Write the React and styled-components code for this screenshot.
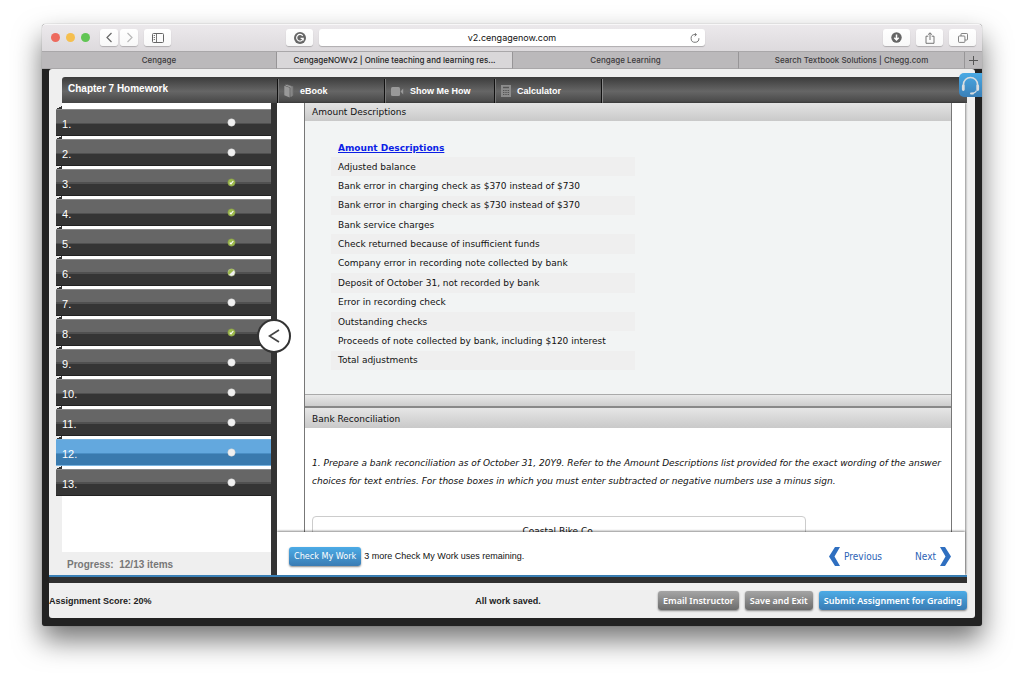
import styled, { createGlobalStyle, css } from 'styled-components';

const GlobalStyle = createGlobalStyle`
    * {
        box-sizing: border-box;
    }
    body {
        margin: 0;
        background: #fff;
        font-family: "Liberation Sans", Arial, sans-serif;
        font-size: 9px;
        color: #111;
    }
    button {
        font: inherit;
        padding: 0;
        border: 0;
        cursor: pointer;
    }
    svg {
        display: block;
        flex: none;
    }
`;

const Desktop = styled.div`
    display: flex;
    height: 100vh;
    padding: 24px 42px 60px;
    overflow: hidden;
`;

const Window = styled.div`
    flex: 1;
    min-width: 0;
    display: flex;
    flex-direction: column;
    background: #222;
    border-radius: 4px 4px 3px 3px;
    box-shadow: 0 0 1px rgba(0, 0, 0, 0.5), 0 14px 28px rgba(0, 0, 0, 0.55);
`;

/* browser chrome */

const Toolbar = styled.div`
    display: grid;
    grid-template-columns: 235fr 419fr 271fr;
    align-items: center;
    height: 27px;
    padding: 0 6px 0 9px;
    border-radius: 4px 4px 0 0;
    background: linear-gradient(#ece9ec, #dddadd);
    box-shadow: inset 0 1px 0 #f8f7f8;
`;

const ToolGroup = styled.div`
    display: flex;
    align-items: center;
    justify-content: ${({$end}) => $end ? 'flex-end' : 'flex-start'};
    gap: 6px;
`;

const Lights = styled.div`
    display: flex;
    gap: 6px;
    margin-right: 4px;
`;

const Light = styled.span`
    width: 9px;
    height: 9px;
    border-radius: 50%;
    background: ${({$color}) => $color};
`;

const NavPair = styled.div`
    display: flex;
    gap: 2px;
`;

const ToolButton = styled.button`
    display: flex;
    align-items: center;
    justify-content: center;
    width: ${({$small}) => $small ? '18px' : '27px'};
    height: 17px;
    color: ${({$faded}) => $faded ? '#b9b9b9' : '#666'};
    background: linear-gradient(#fff, #f8f8f8);
    border-radius: 3px;
    box-shadow: 0 1px 1px rgba(0, 0, 0, 0.22);
`;

const AddressBar = styled.div`
    flex: 1;
    display: flex;
    align-items: center;
    height: 17px;
    padding: 0 5px 0 15px;
    color: #777;
    background: #fff;
    border-radius: 3px;
    box-shadow: 0 1px 1px rgba(0, 0, 0, 0.22);
    input {
        flex: 1;
        min-width: 0;
        padding: 0;
        border: 0;
        outline: 0;
        background: none;
        color: #111;
        text-align: center;
        font: 9px Inter, sans-serif;
    }
`;

const TabBar = styled.div`
    display: grid;
    grid-template-columns: 235fr 236fr 226fr 226fr 17px;
    height: 18px;
    border-top: 1px solid #a9a7a9;
`;

const Tab = styled.button`
    overflow: hidden;
    white-space: nowrap;
    text-overflow: ellipsis;
    font: 500 8px Inter, sans-serif;
    color: ${({$active}) => $active ? '#222' : '#3c3a3c'};
    background: ${({$active}) => $active ? '#d9d7d9' : '#bbb9bb'};
    border-right: 1px solid #979597;
    border-bottom: 1px solid #a9a7a9;
    &:last-child {
        display: grid;
        place-items: center;
        border-right: 0;
    }
`;

/* page */

const Page = styled.div`
    position: relative;
    flex: 1;
    min-height: 0;
    display: flex;
    flex-direction: column;
    margin: 0 7px 8px;
    padding-top: 8px;
    background: #efefef;
    border-radius: 3px;
`;

const Support = styled.button`
    position: absolute;
    top: 4px;
    right: -7px;
    width: 23px;
    height: 24px;
    display: grid;
    place-items: center;
    color: #d9dde0;
    background: linear-gradient(#4aa9e4, #3a80b8);
    border-radius: 5px 0 0 5px;
`;

const Header = styled.header`
    display: flex;
    height: 26px;
    margin: 0 8px 0 13px;
    color: #fff;
    background: linear-gradient(#3b3b3b, #666 55%, #464646);
    border-radius: 3px 0 0 0;
    h1 {
        width: 215px;
        margin: 0;
        padding: 5px 6px;
        font-size: 10px;
        line-height: 13px;
        font-weight: bold;
    }
`;

const Tool = styled.button`
    display: flex;
    align-items: center;
    gap: 6px;
    width: ${({$width}) => $width}px;
    margin-top: 2px;
    padding: 0 0 0 6px;
    color: #fff;
    background: none;
    font-weight: bold;
    border-left: 1px solid #111;
    box-shadow: inset 1px 0 0 #777;
    svg {
        color: #999;
    }
`;

const ToolEnd = styled.span`
    flex: 1;
    margin-top: 2px;
    border-left: 1px solid #111;
    box-shadow: inset 1px 0 0 #888;
`;

const Body = styled.div`
    flex: 1;
    min-height: 0;
    display: flex;
    padding-right: 10px;
`;

const Sidebar = styled.nav`
    display: flex;
    flex-direction: column;
    width: 222px;
    padding-left: 13px;
`;

const Questions = styled.ol`
    flex: 1;
    min-height: 0;
    margin: 0;
    padding: 3px 0 0;
    list-style: none;
    background: #fff;
    li {
        margin-left: -6px;
    }
    li::before {
        content: "";
        display: block;
        width: 6px;
        height: 3px;
        background: linear-gradient(to bottom right, #efefef 50%, #333 51%);
    }
`;

const Question = styled.button`
    display: flex;
    align-items: center;
    justify-content: space-between;
    width: 100%;
    height: 27px;
    padding: 3px 35px 0 6px;
    color: #fff;
    font-size: 11px;
    border-top: 1px solid #888;
    border-bottom: 1px solid #222;
    background: linear-gradient(#666 50%, #505050 50%, #505050 56%, #353535 56%);
    ${({$current}) => $current && css`
        border-color: #7ab4e0;
        background: linear-gradient(#63a8de 50%, #4a8ec4 50%, #4a8ec4 56%, #3a7aae 56%);
    `}
    svg {
        margin-bottom: 3px;
    }
`;

const Progress = styled.div`
    padding: 6px 5px 4px;
    height: 23px;
    color: #777;
    font-size: 10px;
    line-height: 13px;
    font-weight: bold;
    white-space: pre;
`;

const Divider = styled.div`
    position: relative;
    z-index: 1;
    width: 6px;
    background: #333;
`;

const Collapse = styled.button`
    position: absolute;
    top: 216px;
    left: -14px;
    width: 34px;
    height: 34px;
    display: grid;
    place-items: center;
    color: #444;
    background: #fff;
    border: 2px solid #333;
    border-radius: 50%;
`;

const Main = styled.main`
    flex: 1;
    min-width: 0;
    display: flex;
    flex-direction: column;
    background: #fff;
    box-shadow: 1px 0 2px rgba(0, 0, 0, 0.4);
`;

const Reader = styled.div`
    flex: 1;
    min-height: 0;
    overflow: hidden;
    padding: 0 13px 0 27px;
    font-family: "DejaVu Sans", Verdana, sans-serif;
`;

const Panel = styled.section`
    border: solid #777;
    border-width: 0 1px;
    &:first-child {
        margin-top: -2px;
    }
    h2 {
        margin: 0;
        padding: 2px 7px 0;
        font-size: 9px;
        line-height: 18px;
        font-weight: normal;
        background: linear-gradient(#e6e6e6, #c9c9c9);
    }
`;

const PanelBody = styled.div`
    padding: 17px 26px 24px;
    background: #f2f4f4;
`;

const PanelFoot = styled.div`
    height: 14px;
    border-top: 1px solid #aaa;
    border-bottom: 2px solid #888;
    background: linear-gradient(#e8e8e8, #cdcdcd);
`;

const Descriptions = styled.table`
    width: 304px;
    height: 232px;
    border-collapse: collapse;
    text-align: left;
    th, td {
        height: 19px;
        padding: 0 7px;
    }
    tbody tr:nth-child(odd) {
        background: #efefef;
    }
    a {
        color: #0a1ee6;
    }
`;

const Task = styled.div`
    padding: 26px 7px 0;
    p {
        margin: 0;
        line-height: 18px;
        font-style: italic;
    }
`;

const Sheet = styled.div`
    width: 494px;
    max-width: 100%;
    height: 120px;
    margin-top: 26px;
    padding-top: 9px;
    text-align: center;
    border: 1px solid #ccc;
    border-radius: 4px;
`;

const Actions = styled.div`
    position: relative;
    display: flex;
    align-items: center;
    height: 43px;
    padding: 5px 14px 0 12px;
    background: #fff;
    box-shadow: 0 -1px 2px rgba(0, 0, 0, 0.45);
    span {
        flex: 1;
        padding-left: 3px;
    }
`;

const Pager = styled.a`
    display: flex;
    align-items: center;
    gap: 4px;
    margin-left: ${({$gap}) => $gap ? '33px' : '0'};
    color: #2b62b5;
    font: 10px "DejaVu Sans Condensed", "DejaVu Sans", sans-serif;
    text-decoration: none;
`;

const Button = styled.button`
    height: 19px;
    padding: 0 5px;
    color: #fff;
    font: ${({$strong}) => $strong ? '600 9px "Noto Sans"' : '9px "DejaVu Sans Condensed"'}, sans-serif;
    white-space: nowrap;
    border-radius: 3px;
    background: ${({$gray}) => $gray ? 'linear-gradient(#a5a5a5, #6c6c6c)' : 'linear-gradient(#4cabe6, #3a7cb4)'};
    box-shadow: 0 1px 2px rgba(0, 0, 0, 0.45);
`;

const Rail = styled.div`
    height: 8px;
    margin-right: 8px;
    background: #303030;
    border-top: 2px solid #3a80b6;
`;

const Footer = styled.footer`
    display: grid;
    grid-template-columns: 1fr auto 1fr;
    align-items: center;
    height: 35px;
    padding-right: 8px;
    font-weight: bold;
    color: #222;
    div {
        display: flex;
        justify-content: flex-end;
        gap: 6px;
    }
`;

const TABS = [
    'Cengage',
    'CengageNOWv2 | Online teaching and learning res...',
    'Cengage Learning',
    'Search Textbook Solutions | Chegg.com',
];

const STATUSES = ['open', 'open', 'done', 'done', 'done', 'half', 'open', 'done', 'open', 'open', 'open', 'open', 'open'];
const CURRENT = 12;

const DESCRIPTIONS = [
    'Adjusted balance',
    'Bank error in charging check as $370 instead of $730',
    'Bank error in charging check as $730 instead of $370',
    'Bank service charges',
    'Check returned because of insufficient funds',
    'Company error in recording note collected by bank',
    'Deposit of October 31, not recorded by bank',
    'Error in recording check',
    'Outstanding checks',
    'Proceeds of note collected by bank, including $120 interest',
    'Total adjustments',
];

function StatusDot({status}) {
    return (
        <svg width="9" height="9" viewBox="0 0 9 9">
            <circle cx="4.5" cy="4.5" r="3.7" fill={status === 'done' ? '#9dba4c' : '#f0f0f0'} stroke={status === 'open' ? '#ccc' : '#7d8f4a'} strokeWidth="0.5"/>
            {status === 'half' && <path d="M1.9 7.1A3.7 3.7 0 0 1 7.1 1.9Z" fill="#9dba4c"/>}
            {status === 'done' && <path d="M2.8 4.6 4 5.9 6.3 3" fill="none" stroke="#fff" strokeWidth="1.1"/>}
        </svg>
    );
}

function Chevron({right, size = 11}) {
    return (
        <svg width={size} height={size} viewBox="0 0 11 11" fill="none" stroke="currentColor" strokeWidth="1.2">
            <path d={right ? 'M3.5 1 8 5.5 3.5 10' : 'M7.5 1 3 5.5 7.5 10'}/>
        </svg>
    );
}

function PagerArrow({right}) {
    return (
        <svg width="11" height="19" viewBox="0 0 11 19" fill="#2f6fc0">
            <path d={right ? 'M0 0H5L11 9.5 5 19H0L5.5 9.5Z' : 'M11 0H6L0 9.5 6 19H11L5.5 9.5Z'}/>
        </svg>
    );
}

function BrowserBar() {
    return (
        <>
            <Toolbar>
                <ToolGroup>
                    <Lights>
                        <Light $color="#ed6a5e"/>
                        <Light $color="#f5bf4f"/>
                        <Light $color="#61c554"/>
                    </Lights>
                    <NavPair>
                        <ToolButton $small aria-label="Back"><Chevron/></ToolButton>
                        <ToolButton $small $faded aria-label="Forward"><Chevron right/></ToolButton>
                    </NavPair>
                    <ToolButton aria-label="Sidebar">
                        <svg width="12" height="10" viewBox="0 0 12 10" fill="none" stroke="currentColor">
                            <rect x="0.5" y="0.5" width="11" height="9" rx="1"/>
                            <path d="M4.5 0.5V9.5M1.7 2.5H3M1.7 4.5H3M1.7 6.5H3" strokeWidth="0.9"/>
                        </svg>
                    </ToolButton>
                </ToolGroup>
                <ToolGroup>
                    <ToolButton aria-label="Grammar check">
                        <svg width="12" height="12" viewBox="0 0 12 12">
                            <circle cx="6" cy="6" r="6" fill="currentColor"/>
                            <path d="M8.7 3.9A3.3 3.3 0 1 0 9.2 6.4H6.6M9.2 6.2V8.6" fill="none" stroke="#fff" strokeWidth="1.2"/>
                        </svg>
                    </ToolButton>
                    <AddressBar>
                        <input aria-label="Address" defaultValue="v2.cengagenow.com"/>
                        <svg width="10" height="10" viewBox="0 0 10 10" fill="none" stroke="currentColor">
                            <path d="M8.9 5.2A3.9 3.9 0 1 1 5 1.5H6.2"/>
                            <path d="M4.7 0 6.5 1.6 4.7 3.3"/>
                        </svg>
                    </AddressBar>
                </ToolGroup>
                <ToolGroup $end>
                    <ToolButton aria-label="Downloads">
                        <svg width="11" height="11" viewBox="0 0 11 11">
                            <circle cx="5.5" cy="5.5" r="5.2" fill="currentColor"/>
                            <path d="M5.5 2.4V7M3.3 5.7 5.5 8 7.7 5.7" fill="none" stroke="#fff" strokeWidth="1.5"/>
                        </svg>
                    </ToolButton>
                    <ToolButton aria-label="Share">
                        <svg width="10" height="12" viewBox="0 0 10 12" fill="none" stroke="currentColor" strokeWidth="0.9">
                            <path d="M3.3 4.2H1V11.3H9V4.2H6.7M5 8V0.9M2.9 2.8 5 0.8 7.1 2.8"/>
                        </svg>
                    </ToolButton>
                    <ToolButton aria-label="Show all tabs">
                        <svg width="10" height="10" viewBox="0 0 10 10" fill="none" stroke="currentColor" strokeWidth="0.8">
                            <rect x="0.5" y="3" width="6.4" height="6.4" rx="0.8"/>
                            <path d="M3 3V1.3Q3 0.5 3.8 0.5H8.7Q9.5 0.5 9.5 1.3V6.2Q9.5 7 8.7 7H7"/>
                        </svg>
                    </ToolButton>
                </ToolGroup>
            </Toolbar>
            <TabBar>
                {TABS.map((tab, i) => <Tab key={tab} $active={i === 1}>{tab}</Tab>)}
                <Tab aria-label="New tab">
                    <svg width="9" height="9" viewBox="0 0 9 9" stroke="#555"><path d="M4.5 0V9M0 4.5H9"/></svg>
                </Tab>
            </TabBar>
        </>
    );
}

function QuestionNav() {
    return (
        <Sidebar>
            <Questions>
                {STATUSES.map((status, i) => (
                    <li key={i}>
                        <Question $current={i + 1 === CURRENT}>
                            {i + 1}.
                            <StatusDot status={status}/>
                        </Question>
                    </li>
                ))}
            </Questions>
            <Progress>Progress:  12/13 items</Progress>
        </Sidebar>
    );
}

function App() {
    return (
        <Desktop>
            <GlobalStyle/>
            <Window>
                <BrowserBar/>
                <Page>
                    <Header>
                        <h1>Chapter 7 Homework</h1>
                        <Tool $width={107}>
                            <svg width="10" height="14" viewBox="0 0 10 14" fill="currentColor">
                                <path d="M0.3 1.8 5.6 3.8V13.6L0.3 11.2Z"/>
                                <path d="M1.2 1 3.4 0.4 9.2 2.4V11.6L7.4 12.4V3.4Z" fill="#7d7d7d"/>
                                <path d="M1.4 1.1 7 3.2V12.8" fill="none" stroke="#bbb" strokeWidth="0.6"/>
                            </svg>
                            eBook
                        </Tool>
                        <Tool $width={110}>
                            <svg width="13" height="9" viewBox="0 0 13 9" fill="currentColor">
                                <rect width="9" height="9" rx="1.5"/>
                                <path d="M9.6 4.5 12.2 1.6V7.4Z"/>
                            </svg>
                            Show Me How
                        </Tool>
                        <Tool $width={107}>
                            <svg width="10" height="12" viewBox="0 0 10 12">
                                <rect width="10" height="12" fill="#8c8c8c"/>
                                <path d="M2 2.5H8" stroke="#555" strokeWidth="1.4"/>
                                <path d="M2 5.5H8M2 7.5H8M2 9.5H8" stroke="#555" strokeDasharray="1.4 0.9"/>
                            </svg>
                            Calculator
                        </Tool>
                        <ToolEnd/>
                    </Header>
                    <Body>
                        <QuestionNav/>
                        <Divider>
                            <Collapse aria-label="Collapse question list">
                                <svg width="12" height="14" viewBox="0 0 12 14" fill="none" stroke="currentColor" strokeWidth="1.7">
                                    <path d="M11 1 1.5 7 11 13"/>
                                </svg>
                            </Collapse>
                        </Divider>
                        <Main>
                            <Reader>
                                <Panel>
                                    <h2>Amount Descriptions</h2>
                                    <PanelBody>
                                        <Descriptions>
                                            <thead>
                                                <tr><th><a href="#amounts">Amount Descriptions</a></th></tr>
                                            </thead>
                                            <tbody>
                                                {DESCRIPTIONS.map((text) => <tr key={text}><td>{text}</td></tr>)}
                                            </tbody>
                                        </Descriptions>
                                    </PanelBody>
                                    <PanelFoot/>
                                </Panel>
                                <Panel>
                                    <h2>Bank Reconciliation</h2>
                                    <Task>
                                        <p>1. Prepare a bank reconciliation as of October 31, 20Y9. Refer to the Amount
                                            Descriptions list provided for the exact wording of the answer choices for
                                            text entries. For those boxes in which you must enter subtracted or negative
                                            numbers use a minus sign.</p>
                                        <Sheet>Coastal Bike Co.</Sheet>
                                    </Task>
                                </Panel>
                            </Reader>
                            <Actions>
                                <Button>Check My Work</Button>
                                <span>3 more Check My Work uses remaining.</span>
                                <Pager href="#previous"><PagerArrow/>Previous</Pager>
                                <Pager href="#next" $gap>Next<PagerArrow right/></Pager>
                            </Actions>
                        </Main>
                    </Body>
                    <Rail/>
                    <Footer>
                        <span>Assignment Score: 20%</span>
                        <span>All work saved.</span>
                        <div>
                            <Button $gray $strong>Email Instructor</Button>
                            <Button $gray $strong>Save and Exit</Button>
                            <Button $strong>Submit Assignment for Grading</Button>
                        </div>
                    </Footer>
                    <Support aria-label="Support">
                        <svg width="19" height="19" viewBox="0 0 19 19" fill="none" stroke="currentColor">
                            <path d="M2.5 10V8.5A7 7 0 0 1 16.5 8.5V10" strokeWidth="1.6"/>
                            <path d="M2.3 10V13.5M16.7 10V13.5" strokeWidth="2.8" strokeLinecap="round"/>
                            <path d="M15.5 14.5Q14 17.5 10 17.5" strokeWidth="1.2"/>
                            <path d="M10 17.5H12" strokeWidth="2" strokeLinecap="round"/>
                        </svg>
                    </Support>
                </Page>
            </Window>
        </Desktop>
    );
}

export default App;
